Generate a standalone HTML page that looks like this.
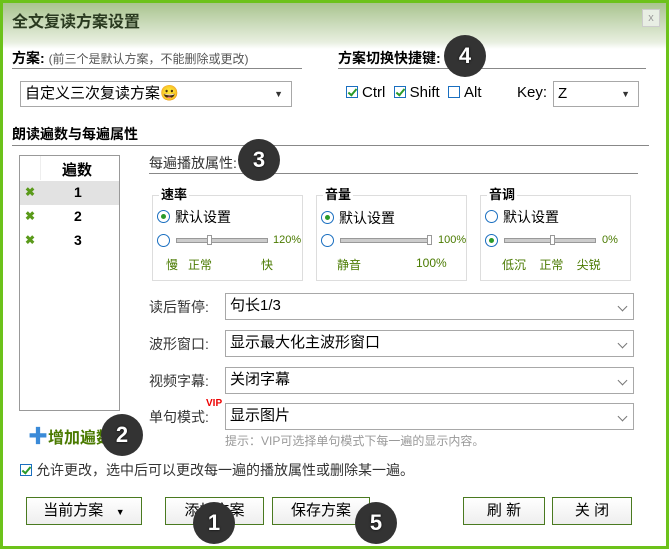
<!DOCTYPE html>
<html><head><meta charset="utf-8"><style>
*{margin:0;padding:0;box-sizing:border-box}
body{width:669px;height:549px;overflow:hidden;background:#fff;font-family:"Liberation Sans","Noto Sans CJK SC",sans-serif;font-size:14px;color:#000;position:relative}
.frame{position:absolute;left:0;top:0;width:669px;height:549px;border:3px solid #6cc21a;border-top:3px solid #6cc21a}
.a{position:absolute;white-space:nowrap}
.tb{position:absolute;left:3px;top:3px;width:663px;height:46px;background:linear-gradient(#a9c48f,#e8efe0 85%,#fff)}
.ln{position:absolute;height:1px;background:#888}
.sel{position:absolute;border:1px solid #a8a8a8;background:#fff;padding-left:4px;line-height:24px;font-size:15px}
.sel .ar{position:absolute;right:8px;top:0;font-size:9px;color:#333}
.cv{position:absolute;right:7px;top:9px;width:7px;height:7px;border-right:1px solid #777;border-bottom:1px solid #777;transform:rotate(45deg)}
.cb{display:inline-block;width:12px;height:12px;border:1px solid #1a6fc0;vertical-align:-1px;margin-right:4px;position:relative;background:#fff}
.cb.k::after{content:"";position:absolute;left:3px;top:0px;width:3px;height:7px;border-right:2px solid #2a9a2a;border-bottom:2px solid #2a9a2a;transform:rotate(40deg)}
.rd{position:absolute;width:13px;height:13px;border:1px solid #1a6fc0;border-radius:50%;background:#fff}
.rd.k::after{content:"";position:absolute;left:3px;top:3px;width:5px;height:5px;border-radius:50%;background:#2a9a2a}
.grp{position:absolute;border:1px solid #ddd;top:195px;height:86px;width:151px}
.gt{position:absolute;top:-12px;left:6px;background:#fff;font-weight:bold;font-size:13px;padding:0 2px}
.sl{position:absolute;height:5px;border:1px solid #999;background:#ccc}
.th{position:absolute;width:5px;height:10px;border:1px solid #999;background:#fff;top:-4px}
.g{color:#4a7a00;font-size:12px}
.btn{position:absolute;top:497px;height:28px;border:1px solid #4a7a20;background:linear-gradient(#fff,#eee);text-align:center;line-height:26px;font-size:15px}
.bd{position:absolute;width:42px;height:42px;border-radius:50%;background:#333;color:#fff;font-weight:bold;font-size:22px;text-align:center;line-height:42px;font-family:"Liberation Sans",sans-serif;text-shadow:0 0 2px #000}
.x{color:#5a9a1a;font-weight:bold;font-size:12px}
</style></head><body>
<div class="tb"></div>
<div class="frame"></div>
<div class="a" style="left:12px;top:8px;font-size:16px;font-weight:bold;color:#2a3a20">全文复读方案设置</div>
<div class="a" style="left:642px;top:9px;width:18px;height:18px;border:1px solid #ccc;background:#e8eee4;color:#999;font-size:11px;text-align:center;line-height:16px">x</div>

<div class="a" style="left:12px;top:48px;font-size:14px;font-weight:bold">方案: <span style="font-weight:normal;font-size:12px;color:#555">(前三个是默认方案，不能删除或更改)</span></div>
<div class="ln" style="left:12px;top:68px;width:290px"></div>
<div class="a" style="left:338px;top:48px;font-weight:bold;font-size:14px">方案切换快捷键:</div>
<div class="ln" style="left:338px;top:68px;width:308px"></div>
<div class="sel" style="left:20px;top:81px;width:272px;height:26px">自定义三次复读方案😀<span class="ar">▼</span></div>
<div class="a" style="left:346px;top:84px;font-size:15px"><span class="cb k"></span>Ctrl&nbsp; <span class="cb k"></span>Shift&nbsp; <span class="cb"></span>Alt</div>
<div class="a" style="left:517px;top:84px;font-size:15px">Key:</div>
<div class="sel" style="left:553px;top:81px;width:86px;height:26px">Z<span class="ar">▼</span></div>

<div class="a" style="left:12px;top:124px;font-weight:bold;font-size:14px">朗读遍数与每遍属性</div>
<div class="ln" style="left:12px;top:145px;width:637px"></div>

<div class="a" style="left:19px;top:155px;width:101px;height:256px;border:1px solid #999"></div>
<div class="a" style="left:40px;top:156px;width:1px;height:24px;background:#eee"></div>
<div class="a" style="left:62px;top:159px;font-weight:bold;font-size:15px">遍数</div>
<div class="a" style="left:20px;top:181px;width:99px;height:24px;background:#e2e2e2"></div>
<div class="a x" style="left:25px;top:185px">✖</div><div class="a" style="left:74px;top:184px;font-weight:bold">1</div>
<div class="a x" style="left:25px;top:209px">✖</div><div class="a" style="left:74px;top:208px;font-weight:bold">2</div>
<div class="a x" style="left:25px;top:233px">✖</div><div class="a" style="left:74px;top:232px;font-weight:bold">3</div>

<div class="a" style="left:149px;top:153px;font-size:14px;color:#333">每遍播放属性:</div>
<div class="ln" style="left:149px;top:173px;width:489px"></div>

<div class="grp" style="left:152px"><span class="gt">速率</span></div>
<div class="rd k" style="left:157px;top:210px"></div><div class="a" style="left:175px;top:207px">默认设置</div>
<div class="rd" style="left:157px;top:234px"></div>
<div class="sl" style="left:176px;top:238px;width:92px"><div class="th" style="left:30px"></div></div>
<div class="a g" style="left:273px;top:234px;font-size:11px">120%</div>
<div class="a g" style="left:166px;top:256px">慢&nbsp;&nbsp; 正常</div><div class="a g" style="left:261px;top:256px">快</div>

<div class="grp" style="left:316px"><span class="gt">音量</span></div>
<div class="rd k" style="left:321px;top:211px"></div><div class="a" style="left:339px;top:208px">默认设置</div>
<div class="rd" style="left:321px;top:234px"></div>
<div class="sl" style="left:340px;top:238px;width:92px"><div class="th" style="left:86px"></div></div>
<div class="a g" style="left:438px;top:234px;font-size:11px">100%</div>
<div class="a g" style="left:337px;top:256px">静音</div><div class="a g" style="left:416px;top:256px">100%</div>

<div class="grp" style="left:480px"><span class="gt">音调</span></div>
<div class="rd" style="left:485px;top:210px"></div><div class="a" style="left:503px;top:207px">默认设置</div>
<div class="rd k" style="left:485px;top:234px"></div>
<div class="sl" style="left:504px;top:238px;width:92px"><div class="th" style="left:45px"></div></div>
<div class="a g" style="left:602px;top:234px;font-size:11px">0%</div>
<div class="a g" style="left:502px;top:256px">低沉&nbsp;&nbsp;&nbsp; 正常&nbsp;&nbsp;&nbsp; 尖锐</div>

<div class="a" style="left:149px;top:297px;color:#333">读后暂停:</div>
<div class="sel" style="left:225px;top:293px;width:409px;height:27px">句长1/3<span class="cv"></span></div>
<div class="a" style="left:149px;top:334px;color:#333">波形窗口:</div>
<div class="sel" style="left:225px;top:330px;width:409px;height:27px">显示最大化主波形窗口<span class="cv"></span></div>
<div class="a" style="left:149px;top:371px;color:#333">视频字幕:</div>
<div class="sel" style="left:225px;top:367px;width:409px;height:27px">关闭字幕<span class="cv"></span></div>
<div class="a" style="left:149px;top:407px;color:#333">单句模式:</div>
<div class="a" style="left:206px;top:398px;color:#e00;font-weight:bold;font-size:10px">VIP</div>
<div class="sel" style="left:225px;top:403px;width:409px;height:27px">显示图片<span class="cv"></span></div>
<div class="a" style="left:225px;top:432px;font-size:12px;color:#999">提示：VIP可选择单句模式下每一遍的显示内容。</div>

<div class="a" style="left:28px;top:424px;font-size:16px;font-weight:bold;color:#4a7a00"><span style="color:#3a8ad8;font-size:20px;line-height:16px">✚</span>增加遍数</div>

<div class="a" style="left:20px;top:460px;color:#333"><span class="cb k"></span>允许更改，选中后可以更改每一遍的播放属性或删除某一遍。</div>

<div class="btn" style="left:26px;width:116px">当前方案&nbsp;&nbsp;&nbsp;<span style="font-size:9px">▼</span></div>
<div class="btn" style="left:165px;width:99px">添加方案</div>
<div class="btn" style="left:272px;width:98px">保存方案</div>
<div class="btn" style="left:463px;width:82px">刷 新</div>
<div class="btn" style="left:552px;width:80px">关 闭</div>

<div class="bd" style="left:444px;top:35px">4</div>
<div class="bd" style="left:238px;top:139px">3</div>
<div class="bd" style="left:101px;top:414px">2</div>
<div class="bd" style="left:193px;top:502px">1</div>
<div class="bd" style="left:355px;top:502px">5</div>
</body></html>
